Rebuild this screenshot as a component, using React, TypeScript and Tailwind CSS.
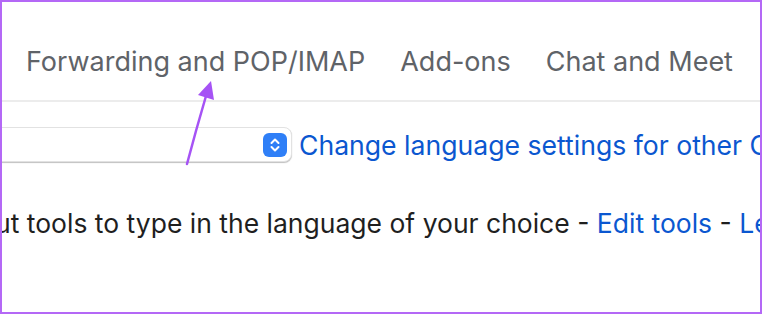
import React from "react";

export default function App() {
  const font = { fontFamily: "Inter, 'Open Sans', sans-serif" };
  return (
    <div
      className="relative w-[762px] h-[314px] overflow-hidden bg-white border-2 border-[#b468f6]"
      style={font}
    >
      {/* Tabs */}
      <div className="flex gap-[35px] pl-[24px] pt-[44px] h-[98px] text-[27px] leading-[32px] text-[#5f6368] whitespace-nowrap">
        <span>Forwarding and POP/IMAP</span>
        <span>Add-ons</span>
        <span>Chat and Meet</span>
      </div>
      <div className="h-[2px] bg-[#ececec]" />

      {/* Language row */}
      <div className="flex items-center mt-[25px] whitespace-nowrap">
        <div className="shrink-0 ml-[-20px] w-[310px] h-[35px] flex items-center justify-end pr-[4px] bg-white border border-[#e2e2e2] rounded-[8px] shadow-[0_1px_1px_rgba(0,0,0,0.25)]">
          <div className="w-[24px] h-[24px] rounded-[6px] bg-[#2f7ff7] flex items-center justify-center">
            <svg width="12" height="16" viewBox="0 0 12 16" fill="none" stroke="white" strokeWidth="2" strokeLinecap="round" strokeLinejoin="round">
              <path d="M2.5 6 L6 2.5 L9.5 6" />
              <path d="M2.5 10 L6 13.5 L9.5 10" />
            </svg>
          </div>
        </div>
        <span className="ml-[7px] text-[26.6px] leading-[32px] text-[#0b57d0]">
          Change language settings for other Gmail users
        </span>
      </div>

      {/* Input tools row */}
      <div className="mt-[45px] ml-[-7px] whitespace-nowrap text-[26.5px] leading-[32px] text-[#1f1f1f]">
        ut tools to type in the language of your choice -{" "}
        <span className="text-[#0b57d0]">Edit tools</span> -{" "}
        <span className="text-[#0b57d0]">Learn more</span>
      </div>

      {/* Arrow annotation */}
      <svg className="absolute left-0 top-0 pointer-events-none" width="762" height="314" viewBox="0 0 762 314">
        <path d="M185 162 Q194 128 204 94" stroke="#a653f5" strokeWidth="2.5" fill="none" strokeLinecap="round" />
        <path d="M209 79 L196 93 L212 98 Z" fill="#a653f5" />
      </svg>
    </div>
  );
}
